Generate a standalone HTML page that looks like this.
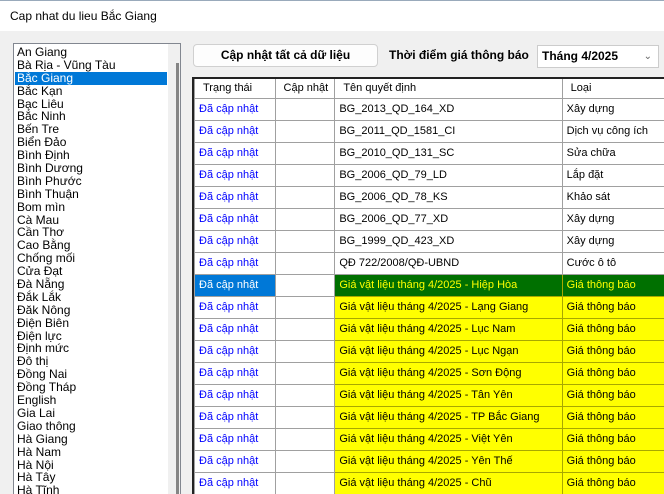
<!DOCTYPE html>
<html><head><meta charset="utf-8"><style>
*{margin:0;padding:0;box-sizing:border-box}
html,body{width:664px;height:494px;overflow:hidden}
body{background:#f0f0f0;font-family:"Liberation Sans",Arial,sans-serif;position:relative}
.title{position:absolute;left:0;top:0;width:664px;height:31px;background:#fff;font-size:12px;line-height:31px;padding-left:10px;color:#000;border-top:1px solid #9ab}
.list{position:absolute;left:13px;top:43px;width:168px;height:451px;background:#fff;border:1px solid #828790;border-bottom:none;overflow:hidden}
.items{position:absolute;left:1px;top:2px;width:152px;font-size:12px;line-height:12.9px}
.items div{padding-left:2px;height:12.9px;white-space:nowrap}
.items .sel{background:#0078d7;color:#fff}
.sb{position:absolute;left:154px;top:0;width:13px;height:460px;background:#f0f0f0}
.thumb{position:absolute;left:162px;top:19px;width:3px;height:440px;background:#858585}
.btn{position:absolute;left:193px;top:44px;width:185px;height:23px;background:#fdfdfd;border:1px solid #d0d0d0;border-radius:4px;font-weight:bold;font-size:12px;text-align:center;line-height:21px}
.lbl{position:absolute;left:389px;top:48px;font-weight:bold;font-size:12px}
.combo{position:absolute;left:537px;top:45px;width:122px;height:23px;background:#fff;border:1px solid #ccc;font-weight:bold;font-size:12px;line-height:21px;padding-left:4px}
.combo span{position:absolute;right:6px;top:0;font-weight:normal;color:#666;font-size:10px}
.grid{position:absolute;left:192px;top:77px;width:480px;height:420px;background:#fff;border-left:2px solid #222;border-top:2px solid #222;overflow:hidden}
table{border-collapse:collapse;font-size:11px;table-layout:fixed}
td{height:22px;border:1px solid #a0a0a0;padding-left:4px;white-space:nowrap;overflow:hidden}
tr.h td{height:19px;background:#fff;padding-left:8px;border-top:none}
td.s{color:#0000ff}
tr.y td.n,tr.y td.l{background:#ffff00;border-color:#a8a800}
tr.g td.n,tr.g td.l{background:#007000;color:#ffff00;border-color:#a8a800}
tr.g td.s{background:#0078d7;color:#fff}
</style></head><body>
<div class="title">Cap nhat du lieu Bắc Giang</div>
<div class="list"><div class="items">
<div>An Giang</div><div>Bà Rịa - Vũng Tàu</div><div class="sel">Bắc Giang</div><div>Bắc Kạn</div><div>Bạc Liêu</div><div>Bắc Ninh</div><div>Bến Tre</div><div>Biển Đảo</div><div>Bình Định</div><div>Bình Dương</div><div>Bình Phước</div><div>Bình Thuận</div><div>Bom mìn</div><div>Cà Mau</div><div>Cần Thơ</div><div>Cao Bằng</div><div>Chống mối</div><div>Cửa Đạt</div><div>Đà Nẵng</div><div>Đắk Lắk</div><div>Đăk Nông</div><div>Điện Biên</div><div>Điện lực</div><div>Định mức</div><div>Đô thị</div><div>Đồng Nai</div><div>Đồng Tháp</div><div>English</div><div>Gia Lai</div><div>Giao thông</div><div>Hà Giang</div><div>Hà Nam</div><div>Hà Nội</div><div>Hà Tây</div><div>Hà Tĩnh</div>
</div><div class="sb"></div><div class="thumb"></div></div>
<div class="btn">Cập nhật tất cả dữ liệu</div>
<div class="lbl">Thời điểm giá thông báo</div>
<div class="combo">Tháng 4/2025<span>&#8964;</span></div>
<div class="grid"><table>
<colgroup><col style="width:81px"><col style="width:60px"><col style="width:228px"><col style="width:110px"></colgroup>
<tr class="h"><td>Trạng thái</td><td>Cập nhật</td><td>Tên quyết định</td><td>Loại</td></tr>
<tr><td class="s">Đã cập nhật</td><td></td><td class="n">BG_2013_QD_164_XD</td><td class="l">Xây dựng</td></tr>
<tr><td class="s">Đã cập nhật</td><td></td><td class="n">BG_2011_QD_1581_CI</td><td class="l">Dịch vụ công ích</td></tr>
<tr><td class="s">Đã cập nhật</td><td></td><td class="n">BG_2010_QD_131_SC</td><td class="l">Sửa chữa</td></tr>
<tr><td class="s">Đã cập nhật</td><td></td><td class="n">BG_2006_QD_79_LD</td><td class="l">Lắp đặt</td></tr>
<tr><td class="s">Đã cập nhật</td><td></td><td class="n">BG_2006_QD_78_KS</td><td class="l">Khảo sát</td></tr>
<tr><td class="s">Đã cập nhật</td><td></td><td class="n">BG_2006_QD_77_XD</td><td class="l">Xây dựng</td></tr>
<tr><td class="s">Đã cập nhật</td><td></td><td class="n">BG_1999_QD_423_XD</td><td class="l">Xây dựng</td></tr>
<tr><td class="s">Đã cập nhật</td><td></td><td class="n">QĐ 722/2008/QĐ-UBND</td><td class="l">Cước ô tô</td></tr>
<tr class="g"><td class="s">Đã cập nhật</td><td></td><td class="n">Giá vật liệu tháng 4/2025 - Hiệp Hòa</td><td class="l">Giá thông báo</td></tr>
<tr class="y"><td class="s">Đã cập nhật</td><td></td><td class="n">Giá vật liệu tháng 4/2025 - Lạng Giang</td><td class="l">Giá thông báo</td></tr>
<tr class="y"><td class="s">Đã cập nhật</td><td></td><td class="n">Giá vật liệu tháng 4/2025 - Lục Nam</td><td class="l">Giá thông báo</td></tr>
<tr class="y"><td class="s">Đã cập nhật</td><td></td><td class="n">Giá vật liệu tháng 4/2025 - Lục Ngạn</td><td class="l">Giá thông báo</td></tr>
<tr class="y"><td class="s">Đã cập nhật</td><td></td><td class="n">Giá vật liệu tháng 4/2025 - Sơn Động</td><td class="l">Giá thông báo</td></tr>
<tr class="y"><td class="s">Đã cập nhật</td><td></td><td class="n">Giá vật liệu tháng 4/2025 - Tân Yên</td><td class="l">Giá thông báo</td></tr>
<tr class="y"><td class="s">Đã cập nhật</td><td></td><td class="n">Giá vật liệu tháng 4/2025 - TP Bắc Giang</td><td class="l">Giá thông báo</td></tr>
<tr class="y"><td class="s">Đã cập nhật</td><td></td><td class="n">Giá vật liệu tháng 4/2025 - Việt Yên</td><td class="l">Giá thông báo</td></tr>
<tr class="y"><td class="s">Đã cập nhật</td><td></td><td class="n">Giá vật liệu tháng 4/2025 - Yên Thế</td><td class="l">Giá thông báo</td></tr>
<tr class="y"><td class="s">Đã cập nhật</td><td></td><td class="n">Giá vật liệu tháng 4/2025 - Chũ</td><td class="l">Giá thông báo</td></tr>
<tr class="y"><td class="s"></td><td></td><td class="n"></td><td class="l"></td></tr>
</table></div>
</body></html>
